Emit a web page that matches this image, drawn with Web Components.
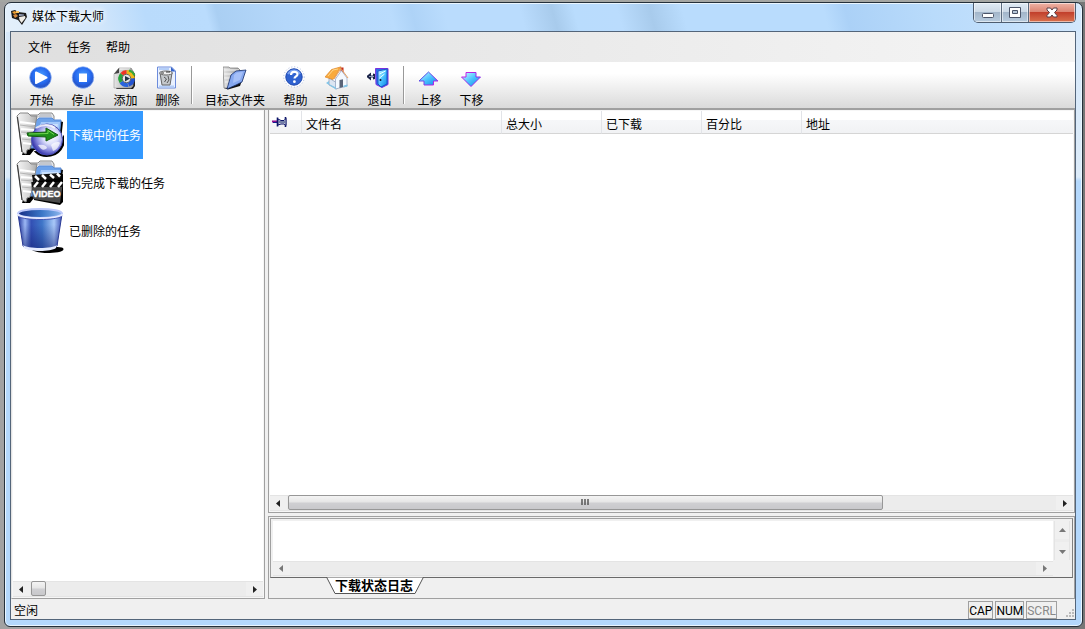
<!DOCTYPE html>
<html lang="zh-CN">
<head>
<meta charset="utf-8">
<title>媒体下载大师</title>
<style>
  body { margin: 0; font: 12px/16px "Noto Sans CJK SC", sans-serif; color: #000; }
</style>
</head>
<body>
<app-window caption="媒体下载大师">
  <menu-bar>
    <menu-entry>文件</menu-entry>
    <menu-entry>任务</menu-entry>
    <menu-entry>帮助</menu-entry>
  </menu-bar>
  <tool-bar>
    <tool-button icon="start">开始</tool-button>
    <tool-button icon="stop">停止</tool-button>
    <tool-button icon="add">添加</tool-button>
    <tool-button icon="remove">删除</tool-button>
    <tool-separator></tool-separator>
    <tool-button icon="folder" wide>目标文件夹</tool-button>
    <tool-button icon="help">帮助</tool-button>
    <tool-button icon="home">主页</tool-button>
    <tool-button icon="exit">退出</tool-button>
    <tool-separator></tool-separator>
    <tool-button icon="up">上移</tool-button>
    <tool-button icon="down">下移</tool-button>
  </tool-bar>
  <split-view>
    <task-panel slot="side">
      <task-item icon="downloading" selected>下载中的任务</task-item>
      <task-item icon="video">已完成下载的任务</task-item>
      <task-item icon="bin">已删除的任务</task-item>
    </task-panel>
    <download-table></download-table>
    <log-panel label="下载状态日志"></log-panel>
  </split-view>
  <status-bar message="空闲">
    <status-key>CAP</status-key>
    <status-key>NUM</status-key>
    <status-key off>SCRL</status-key>
  </status-bar>
</app-window>

<script>
const folderBack = `
  <path d="M44 10l3 1-3 27-26 1-4 5H6l3-9z" fill="#000"/>
  <path d="M12 4h10l2-2h12l2 3v31H8z" fill="#e4e6ea" stroke="#8a8a8a"/>
  <path d="M24 3h11l1 3H22z" fill="#c4c7ce"/>
  <path d="M15 37 19 11l4-4h13l2 2h7l-3 28z" fill="#6da2ea" stroke="#5a8cd8"/>
  <path d="M18 37 25 11h19l-3 26z" fill="#a3c8fa"/><path d="M26 13h16l-2 11c-6-3-10-2-16 0z" fill="#c9e1fe"/>
  <path d="M1 5 4 2h8l3 3h6l-4 21-3 12-3 1-1 4-4-2z" fill="url(#paper)" stroke="#888"/>
  <path d="M4 11l15 2M5 18l13 1M6 25l11 1M7 32l8 1" stroke="#fff" stroke-width="2"/>
  <path d="M4 14l15 2M5 21l13 1M6 28l10 1" stroke="#b4b4b4"/>
  <path d="M1.500 6 6 41" stroke="#333"/>`;

const defs = `<defs>
  <linearGradient id="paper" x2="1"><stop stop-color="#f4f4f4"/><stop offset=".6" stop-color="#d4d4d4"/><stop offset="1" stop-color="#a8a8a8"/></linearGradient>
  <linearGradient id="gray" x2="1"><stop stop-color="#e6e6e6"/><stop offset="1" stop-color="#9c9c9c"/></linearGradient>
  <radialGradient id="ball" cy=".4"><stop stop-color="#4aa0ff"/><stop offset=".75" stop-color="#2568ee"/><stop offset="1" stop-color="#2858cc"/></radialGradient>
  <radialGradient id="globe" cx=".62" cy=".4" r=".62"><stop stop-color="#fff"/><stop offset=".4" stop-color="#dcdffb"/><stop offset=".75" stop-color="#8587dc"/><stop offset="1" stop-color="#3a3aae"/></radialGradient>
  <linearGradient id="cyan" x2="1" y2="1"><stop stop-color="#d4faff"/><stop offset=".5" stop-color="#4cc4ff"/><stop offset="1" stop-color="#0c84e4"/></linearGradient>
  <linearGradient id="edge" y2="1"><stop stop-color="#2268e8"/><stop offset="1" stop-color="#d018e8"/></linearGradient>
  <linearGradient id="edge2" y2="1"><stop stop-color="#d81ce4"/><stop offset=".6" stop-color="#8a2ce8"/><stop offset="1" stop-color="#c020e8"/></linearGradient>
  <linearGradient id="metal" x2="1"><stop stop-color="#1c2f98"/><stop offset=".16" stop-color="#9cb8f4"/><stop offset=".3" stop-color="#3350b4"/><stop offset=".55" stop-color="#3f76c8"/><stop offset=".82" stop-color="#a9c8f8"/><stop offset="1" stop-color="#3c50b4"/></linearGradient>
  <linearGradient id="depth" x2="0" y2="1"><stop offset=".3" stop-color="#101c70" stop-opacity="0"/><stop offset="1" stop-color="#101c70" stop-opacity=".55"/></linearGradient>
  <linearGradient id="inner" x2="1"><stop stop-color="#152c84"/><stop offset=".55" stop-color="#3c78c8"/><stop offset="1" stop-color="#8fb8ee"/></linearGradient>
</defs>`;

const ICONS = {
  start: [24, `<circle cx="11.5" cy="11.5" r="10.8" fill="url(#ball)" stroke="#8fb4f8" stroke-width=".7"/>
    <path d="M7 6.500 17.500 11.700 7 17z" fill="#fff" stroke="#fff" stroke-width="2" stroke-linejoin="round"/>`],
  stop: [24, `<circle cx="12" cy="11.5" r="10.8" fill="url(#ball)" stroke="#8fb4f8" stroke-width=".7"/>
    <rect x="8" y="7.5" width="8" height="8.5" fill="#fff"/>`],
  add: [24, `<path d="M3 23h17l2-3V8l-4-6z" fill="#222"/>
    <path d="M1 22V8l5-6h12l2 3v15l-2 2z" fill="url(#gray)" stroke="#999" stroke-width=".6"/><path d="M1 8l5-6v5z" fill="#444"/><path d="M7 3h10" stroke="#fff"/>
    <path d="M13.500 12.500V4a8.500 8.500 0 0 1 8.500 8.500z" fill="#f0b818"/><path d="M13.500 12.500H22a8.500 8.500 0 0 1-6 8z" fill="#2454d0"/>
    <path d="M13.500 12.500l2 8.300a8.500 8.500 0 0 1-9-3.800z" fill="#2a64dc"/><path d="M13.500 12.500l-7 4.500a8.500 8.500 0 0 1 1-10z" fill="#28a43c"/>
    <path d="M13.500 12.500 7.500 7a8.500 8.500 0 0 1 6-3z" fill="#f03424"/><path d="M16 4.500a8.500 8.500 0 0 1 5.500 5" fill="none" stroke="#38a838" stroke-width="2"/>
    <circle cx="13.500" cy="12.500" r="4.200" fill="#e8e8e8" stroke="#666"/><path d="M12 10 17 12.500l-5 3z" fill="#234"/>`],
  remove: [24, `<path d="M2.500 1h14l4 4v17h-18z" fill="#e9f1ff" stroke="#6c8cdc"/><path d="M16 1v4.500h4.500z" fill="#3764c8"/>
    <path d="M4 3h10M4 20.500h15" stroke="#b4cef8" stroke-width="2"/>
    <path d="M5 7h12l-2 12H7z" fill="#c4c8cc" stroke="#666"/><ellipse cx="11" cy="7" rx="6.500" ry="2" fill="#f4f4f4" stroke="#666"/>
    <path d="M6 7h3M11 6h4" stroke="#333"/><path d="M9 11l2.500 2-2 3M13 10l1 4-2 3" stroke="#555" fill="none"/>`],
  folder: [24, `<path d="M2 2l20 4-5 14L5 23.500 1 22z" fill="#111"/>
    <path d="M0 1h6l1 1h8l2 2-2 11L4 22H1z" fill="url(#gray)" stroke="#777" stroke-width=".7"/>
    <path d="M1 4h15M1 8h14M1 12h12M2 16h8" stroke="#f4f4f4"/>
    <path d="M8 9l5-4 10-1-4 12-6 3-9 4z" fill="#86a8f0" stroke="#142c68" stroke-width=".8"/><path d="M11 9l3-2.500 6-.5-3 8-7 3z" fill="#b4cbfb" opacity=".7"/>`],
  help: [24, `<circle cx="11" cy="11" r="10.200" fill="#fff" stroke="#a8b8e0" stroke-dasharray="1 2"/>
    <circle cx="11" cy="11" r="8.200" fill="#2f62d0" stroke="#1c46ae"/><path d="M5 8a7 7 0 0 1 12 0" stroke="#7ba2f0" stroke-width="2" fill="none"/>
    <path d="M8 9c0-4.200 6.500-4 6.500-.8 0 2.200-3 2.300-3 4.300" fill="none" stroke="#fff" stroke-width="2.200"/><circle cx="11.400" cy="15.700" r="1.400" fill="#fff"/>`],
  home: [24, `<path d="M15.500 1.500h3V8l-3-3z" fill="#c42c18"/><path d="M4 12l8 5v6l-8-4z" fill="#dce5f2" stroke="#8896b0" stroke-width=".7"/>
    <path d="M10.500 13l6-8.500L22 12v8l-11.500 3z" fill="#f4f9ff" stroke="#8c9cba" stroke-width=".7"/>
    <path d="M14.500 14l3.500-.7V21l-3.500 1z" fill="#5a6478"/><path d="M1 17l3-2v3l7 3.500v2zM18.500 19.500l4-1v2l-4 1z" fill="#82c5e8"/>
    <path d="M0 11 6.500 3.500 16 .8l-6.500 11L8 13.500z" fill="#f9aa3c" stroke="#d67c22" stroke-width=".6"/><path d="M3 10 8 4l5-1" stroke="#ffd78c" fill="none"/>
    <path d="M9 13 16 2.500 23 12" stroke="#e8a060" fill="none"/>`],
  exit: [24, `<path d="M8.500 2.500H21v16l-6 3-6-3z" fill="#2d6ce8" stroke="#7a30e0"/>
    <path d="M11 5l9-2v15l-6 3-3-3z" fill="url(#cyan)" stroke="#1857c8"/><path d="M12.500 8l6-3M12.500 12l5-4" stroke="#eaffff"/><circle cx="13.500" cy="14" r="1" fill="#113"/>
    <path d="M-1 10.500l5-4v3h2V7.500l2 .5v5l-2 .5v-2H4v3z" fill="#1b2448"/><path d="M2 10.500h5" stroke="#8d98b8"/>`],
  up: [24, `<path d="M11.500 6 21 15h-4.500v4H7v-4H2z" fill="url(#cyan)" stroke="url(#edge)"/>`],
  down: [24, `<path d="M7 6.500h10V11h4.500L12 20.500 2.500 11H7z" fill="url(#cyan)" stroke="url(#edge2)"/>`],
  downloading: [48, folderBack + `<path d="M20 41c8 7 22 5 27-7v-7l-8 12z" fill="#000" stroke="#000" stroke-width="2"/><circle cx="31" cy="28.500" r="15.500" fill="url(#globe)" stroke="#4a4cb4"/>
    <path d="M35 34c3-3 8-4 9-2-1 4-4 7-7 8zM22 34c5-1 9 1 9 3-3 3-6 2-9-3z" fill="#fff" opacity=".7"/>
    <path d="M20 17c6-4 14-4 19 0" stroke="#fff" stroke-width="2" fill="none" opacity=".8"/>
    <path d="M11 22l19-1v-4l12 7-12 6v-4l-18-1z" fill="#1f8f1a" stroke="#155c12"/><path d="M13 23l19-.5v-3l6 4" fill="none" stroke="#70d850"/>`],
  video: [48, folderBack + `<path d="M19 18l28-3v28l-3 3-26-5z" fill="#000"/>
    <path d="M16 16l29-2v5l-28 4z" fill="#111"/><path d="M19 17l4 4M26 16l4 4M34 15.500l4 3.500M41 14.500l3 3" stroke="#fff" stroke-width="2.500"/>
    <path d="M15 23h32l-3 21-27-4z" fill="#4a4a4a"/><path d="M16 23h31v5H16z" fill="#111"/><path d="M22 23l-4 5M30 23l-4 5M38 23l-4 5M46 23l-4 5" stroke="#fff" stroke-width="2.500"/>
    <text x="16.500" y="38" font-family="Liberation Sans, sans-serif" font-weight="700" font-size="9" fill="#fff" stroke="#fff" stroke-width=".4">VIDEO</text>`],
  bin: [48, `<path d="M16 43c6-3 28-4 31-2 3 4-8 5-16 5-6 0-12-1-15-3z" fill="#000"/>
    <path d="M2 7l5 32c3 5 31 5 34 0l5-32z" fill="url(#metal)"/><path d="M2 7l5 32c3 5 31 5 34 0l5-32z" fill="url(#depth)" stroke="#2a3a94"/>
    <path d="M7 38c4 4 30 4 34 0l-1 3c-5 4-27 4-32 0z" fill="#e6ecff"/>
    <ellipse cx="24" cy="6.500" rx="22" ry="4.500" fill="url(#inner)" stroke="#bcc8fb" stroke-width="2"/>
    <path d="M1.500 7c2 6 43 6 45 0" fill="none" stroke="#e7ebff" stroke-width="2"/><path d="M2.500 9.500c6 4 37 4 43 0" fill="none" stroke="#4355b4"/>`],
  pin: [16, `<path d="M0 7.500h6" stroke="#90108c" stroke-width="2"/><path d="M1 8.500h5" stroke="#102090"/>
    <path d="M5.500 3.500v9M13.500 3v10" stroke="#0c1468" stroke-width="1.600"/><path d="M6 5l3 1.500h3l2-2v7l-2-1.500H9L6 11z" fill="#cfd4e4" stroke="#0c1468"/><path d="M7 8h6" stroke="#7480a8" stroke-width="2"/>`],
  app: [16, `<path d="M0 2l4-1 3 2 8 1 1 4-5 8-4-5-6-2z" fill="#1b1b1b"/><path d="M1 3l3-1 2 2-3 1z" fill="#f0a030"/><path d="M5 2h3v2H5z" fill="#ffc35c"/>
    <path d="M2 6l3-1 2 2-3 2z" fill="#d88a3c"/><path d="M8 8l6-1 .5 2-4 5-2-3z" fill="#f1eee8"/><path d="M8 5l5 .5v1L8 7z" fill="#9ba5c0"/>`]
};

const svg = name => {
  const [size, art] = ICONS[name];
  return `<svg width="${size}" height="${size}" viewBox="0 0 ${size} ${size}" aria-hidden="true">${defs}${art}</svg>`;
};

class Base extends HTMLElement {
  connectedCallback() {
    if (this.shadowRoot) return;
    this.attachShadow({ mode: "open" }).innerHTML =
      `<style>*{box-sizing:border-box} :host{box-sizing:border-box} svg{display:block;flex:none}
       button{font:inherit;color:inherit;background:none;border:0;padding:0;margin:0}</style>` + this.view();
  }
}

customElements.define("app-window", class extends Base {
  view() { return `<style>
    :host { display: flex; height: 100vh; min-height: 360px; padding: 2px 2px 2px 4px;
      background: linear-gradient(#a4a6a3, #a4a6a3) top/100% 2px no-repeat, linear-gradient(90deg, #a2a2a2, #777) ; }
    .frame { flex: 1; min-width: 0; display: flex; flex-direction: column; padding: 0 6px 6px 5px;
      border: 1px solid #25303a; border-radius: 7px 7px 6px 6px; box-shadow: inset 0 0 0 1px #eaf6ff;
      background:
        linear-gradient(75deg, #e4f0fb 0, #d3e7fb 90px, #b9dbfc 140px, #badcfd 19%, #aacff3 20%, #b4d7fa 26%, #badcfd 36%, #aed3f7 38%, #badcfd 41%, #badcfd 48%, #a8cbec 51%, #b9dcfd 53%, #badcfd 57%, #a8cbec 60%, #b9dcfd 63%, #b9dcfd 76%, #abd1f7 78%, #b9dbfb 86%, #c3e0fc 93%, #d5e9fd 100%) top/100% 29px no-repeat,
        linear-gradient(#d6e8fa 0, #dcebf9 174px, #b4d8fc 178px, #b4d8fc 100%); }
    header { display: flex; height: 28px; flex: none; padding-left: 1px; }
    h1 { flex: 1; font: inherit; margin: 0; padding: 5px 0 0 5px; text-shadow: 0 0 6px #fff, 0 0 6px #fff; }
    header > svg { margin-top: 6px; }
    .ctl { display: flex; height: 20px; border: 1px solid #4e5d70; border-top: 0; border-radius: 0 0 5px 5px; overflow: hidden; }
    .ctl button { display: grid; place-items: center; width: 28px; border-right: 1px solid #5b6b7e;
      background: linear-gradient(#e0ebf5, #ccd9e6 45%, #a3b6ca 50%, #b8ccdf); box-shadow: inset 0 0 0 1px #ffffff88; }
    .ctl button:nth-child(2) { width: 27px; }
    .ctl .close { width: 46px; border: 0; background: linear-gradient(#eeb4a6, #dc8573 45%, #c2402c 50%, #d9714e); }
    main { flex: 1; min-height: 0; display: flex; flex-direction: column; border: 1px solid #53657a; background: #f0f0f0; }
  </style>
  <div class="frame">
    <header>${svg("app")}<h1>${this.getAttribute("caption")}</h1>
      <div class="ctl">
        <button aria-label="最小化"><svg width="14" height="14"><rect x="1.500" y="7.500" width="11" height="4" rx="1" fill="#fff" stroke="#4c5569"/></svg></button>
        <button aria-label="最大化"><svg width="14" height="14"><path d="M1.500 1.500h11v10h-11z" fill="#fff" stroke="#4c5569"/><path d="M4.500 4.500h5v3h-5z" fill="#b8c8d8" stroke="#4c5569"/></svg></button>
        <button class="close" aria-label="关闭"><svg width="14" height="14"><path d="M2 2h3.500L7 4l1.500-2H12v2L9.500 6.500 12 9.500V11H8.500L7 9l-1.500 2H2V9.500l2.500-3L2 4z" fill="#fff" stroke="#584048"/></svg></button>
      </div>
    </header>
    <main><slot></slot></main>
  </div>`; }
});

customElements.define("menu-bar", class extends Base {
  view() { return `<style>:host{display:flex;align-items:center;gap:15px;height:30px;flex:none;padding-left:17px;
    background:linear-gradient(90deg,#dfdfdf,#f5f5f5)}</style><slot></slot>`; }
});
customElements.define("menu-entry", class extends Base {
  view() { return `<style>:host{display:block}</style><button><slot></slot></button>`; }
});

customElements.define("tool-bar", class extends Base {
  view() { return `<style>:host{display:flex;height:48px;flex:none;padding:4px 0 0 9px;border-bottom:2px solid #a0a0a0;
    background:linear-gradient(#fff 25%,#dadada)}</style><slot></slot>`; }
});
customElements.define("tool-button", class extends Base {
  view() { return `<style>:host{display:block;width:42px} :host([wide]){width:78px}
    button{display:flex;flex-direction:column;align-items:center;gap:2px;width:100%;white-space:nowrap}
    span{padding-left:1px} :host([wide]) span{padding-left:0}</style>
    <button>${svg(this.getAttribute("icon"))}<span><slot></slot></span></button>`; }
});
customElements.define("tool-separator", class extends Base {
  view() { return `<style>:host{display:block;width:8px;height:38px;padding-left:3px} i{display:block;width:2px;height:100%;border-left:1px solid #999;border-right:1px solid #fff}</style><i></i>`; }
});

customElements.define("split-view", class extends Base {
  view() { return `<style>:host{flex:1;min-height:0;display:flex;gap:3px} 
    ::slotted([slot=side]){width:254px;flex:none} section{flex:1;min-width:0;display:flex;flex-direction:column;gap:3px}</style>
    <slot name="side"></slot><section><slot></slot></section>`; }
});

customElements.define("scroll-bar", class extends Base {
  view() {
    const fill = this.hasAttribute("muted") ? "#777" : "#222";
    const arrow = d => `<svg width="7" height="7"><path d="${d}" fill="${fill}"/></svg>`;
    const v = this.hasAttribute("vertical");
    return `<style>
      :host { display: flex; height: 16px; flex: none; background: #ececec; border: 1px solid #e4e4e4; border-width: 1px 0; }
      :host([vertical]) { flex-direction: column; height: auto; border-width: 0 1px; }
      button.end { display: grid; place-items: center; width: 17px; flex: none; background: #f0f0f0; }
      :host([vertical]) button.end { width: auto; height: 18px; }
      .track { flex: 1; padding-left: 1px; display: flex; }
      .thumb { display: grid; place-items: center; width: var(--thumb, 0); height: 15px; border: 1px solid #979797; border-radius: 2px;
        background: linear-gradient(#f4f4f4, #e6e6e6 45%, #cfcfd2 55%, #c8c8cb); margin-top: -1px; }
    </style>
    <button class="end" aria-label="${v ? "向上" : "向左"}">${arrow(v ? "M0 5 3.500 1 7 5z" : "M5 0v7L1 3.500z")}</button>
    <div class="track">${this.hasAttribute("thumb") ? `<div class="thumb">${this.getAttribute("thumb") === "grip" ? `<svg width="9" height="7"><path d="M1 0v6M4 0v6M7 0v6" stroke="#555" stroke-width="1.500"/></svg>` : ""}</div>` : ""}</div>
    <button class="end" aria-label="${v ? "向下" : "向右"}">${arrow(v ? "M0 2 3.500 6 7 2z" : "M2 0v7l4-3.500z")}</button>`;
  }
});

customElements.define("task-panel", class extends Base {
  view() { return `<style>:host{display:flex;flex-direction:column;padding:1px 1px 1px 1px;border:1px solid #a0a0a0;border-width:0 1px 1px 0;border-left:1px solid #e3e3e3;background:#f6f6f6}
    nav{flex:1;background:#fff;padding-left:3px} scroll-bar{--thumb:15px}</style>
    <nav><slot></slot></nav><scroll-bar thumb="plain"></scroll-bar>`; }
});
customElements.define("task-item", class extends Base {
  view() { return `<style>:host{display:block;height:48px} button{display:flex;height:48px;gap:3px}
    span{padding:16px 2px} :host([selected]) span{background:#39f;color:#fff}</style>
    <button>${svg(this.getAttribute("icon"))}<span><slot></slot></span></button>`; }
});

customElements.define("download-table", class extends Base {
  view() { return `<style>
    :host { flex: 1; min-height: 0; display: flex; flex-direction: column; padding: 1px; border: 1px solid #a0a0a0; border-top: 0; background: #f6f6f6; }
    .area { flex: 1; min-height: 0; overflow: hidden; background: #fff; }
    table { width: 100%; table-layout: fixed; border-collapse: separate; border-spacing: 0; }
    th { height: 23px; padding: 3px 4px 0; text-align: left; font-weight: 400; line-height: 16px; border-bottom: 1px solid #d5d5d5; border-right: 1px solid #e2e4e8;
      background: linear-gradient(#fff 40%, #f6f7f9 42%, #f1f2f4); }
    th:first-child { width: 32px; padding: 0 2px; } th:last-child { border-right: 0; }
    .name { width: 200px; } .num { width: 100px; }
    scroll-bar { --thumb: 77.500%; }
  </style>
  <div class="area"><table><thead><tr><th aria-label="固定">${svg("pin")}</th><th class="name">文件名</th><th class="num">总大小</th><th class="num">已下载</th><th class="num">百分比</th><th>地址</th></tr></thead><tbody></tbody></table></div>
  <scroll-bar thumb="grip"></scroll-bar>`; }
});

customElements.define("log-panel", class extends Base {
  view() { const label = this.getAttribute("label"); return `<style>
    :host { display: block; height: 83px; flex: none; padding: 1px; border: 1px solid #a0a0a0; }
    .box { display: grid; grid-template: 40px 15px / 1fr 17px; height: 60px; padding: 2px 2px 1px; border: 1px solid #a0a0a0; border-bottom-color: #696969; border-right-color: #808080; }
    textarea { width: 100%; height: 100%; border: 0; padding: 2px; margin: 0; resize: none; font: inherit; background: #fff; display: block; overflow: hidden; outline: 0; }
    scroll-bar { height: 15px; } scroll-bar[vertical] { height: 39px; margin-left: 1px; }
    .tab { position: relative; display: block; width: 98px; height: 17px; margin: -1px 0 0 56px; }
    .tab svg { position: absolute; left: 0; top: 0; }
    .tab span { position: relative; display: block; height: 17px; padding-right: 2px; text-align: center; font: 700 13px/15px "Noto Sans CJK SC", sans-serif; }
  </style>
  <div class="box"><textarea aria-label="${label}" readonly></textarea><scroll-bar vertical muted></scroll-bar><scroll-bar muted></scroll-bar></div>
  <button class="tab"><svg width="98" height="17"><path d="M.5 0 9 16.500h80L97.500 0z" fill="#fff" stroke="#555"/></svg><span>${label}</span></button>`; }
});

customElements.define("status-bar", class extends Base {
  view() { return `<style>:host{display:flex;height:20px;flex:none;padding:2px 0 0 3px;gap:2px}
    p{flex:1;margin:0;padding-top:1px} svg{margin:7px 1px 0 5px}</style>
    <p>${this.getAttribute("message")}</p><slot></slot>
    <svg width="10" height="10"><path d="M8 1h2v2H8zM8 4h2v2H8zM8 7h2v2H8zM5 4h2v2H5zM5 7h2v2H5zM2 7h2v2H2z" fill="#bbb"/></svg>`; }
});
customElements.define("status-key", class extends Base {
  view() { return `<style>:host{display:block;height:18px;border:1px solid #a0a0a0;font:12px/18px Roboto,sans-serif}
    :host([off]){color:#888}</style><slot></slot>`; }
});
</script>
</body>
</html>
